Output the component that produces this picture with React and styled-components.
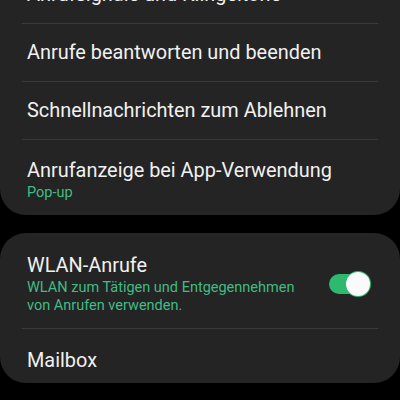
import styled, { createGlobalStyle } from "styled-components";

const GlobalStyle = createGlobalStyle`
  html, body {
    margin: 0;
    padding: 0;
    background: #000;
  }
  body {
    font-family: Roboto, "Noto Sans", sans-serif;
    -webkit-font-smoothing: antialiased;
  }
`;

const Page = styled.div`
  width: 400px;
  height: 400px;
  overflow: hidden;
  background: #000;
  display: flex;
  flex-direction: column;
  gap: 18px;
`;

const Card = styled.section`
  background: #242424;
  border-radius: 26px;
  margin-top: ${({ $offset }) => $offset || 0}px;
  display: flex;
  flex-direction: column;
`;

const Row = styled.div`
  display: flex;
  align-items: center;
  gap: 12px;
  min-height: ${({ $height }) => $height || 58}px;
  padding: ${({ $pad }) => $pad || "0"};
  margin: 0 22px;
  box-sizing: border-box;
  border-bottom: ${({ $last }) => ($last ? "none" : "1px solid #3a3a3a")};
`;

const TextBlock = styled.div`
  flex: 1;
  padding-left: 5px;
  display: flex;
  flex-direction: column;
  gap: 1px;
`;

const Title = styled.div`
  color: #f1f1f1;
  font-size: 19.9px;
  line-height: 24px;
`;

const Sub = styled.div`
  color: #3fbd84;
  font-size: 14.5px;
  line-height: 17.5px;
  padding-right: ${({ $wrap }) => ($wrap ? "20px" : "0")};
`;

const Toggle = styled.div`
  position: relative;
  width: 41px;
  height: 20px;
  margin-right: 8px;
  flex-shrink: 0;
`;

const Track = styled.div`
  position: absolute;
  left: 0;
  top: 0;
  width: 38px;
  height: 20px;
  border-radius: 10px;
  background: #2dba6e;
`;

const Thumb = styled.div`
  position: absolute;
  right: 0;
  top: -2px;
  width: 24px;
  height: 24px;
  border-radius: 50%;
  background: #fafafa;
  box-shadow: 0 0 0 1px #2dba6e;
`;

export default function App() {
  return (
    <>
      <GlobalStyle />
      <Page>
        <Card $offset={-34}>
          <Row>
            <TextBlock>
              <Title>Anrufsignale und Klingeltöne</Title>
            </TextBlock>
          </Row>
          <Row>
            <TextBlock>
              <Title>Anrufe beantworten und beenden</Title>
            </TextBlock>
          </Row>
          <Row>
            <TextBlock>
              <Title>Schnellnachrichten zum Ablehnen</Title>
            </TextBlock>
          </Row>
          <Row $last $height={75} $pad="19px 0 13px">
            <TextBlock>
              <Title>Anrufanzeige bei App-Verwendung</Title>
              <Sub>Pop-up</Sub>
            </TextBlock>
          </Row>
        </Card>

        <Card>
          <Row $height={96} $pad="20px 0 13px">
            <TextBlock>
              <Title>WLAN-Anrufe</Title>
              <Sub $wrap>
                WLAN zum Tätigen und Entgegennehmen von Anrufen verwenden.
              </Sub>
            </TextBlock>
            <Toggle>
              <Track />
              <Thumb />
            </Toggle>
          </Row>
          <Row $last $height={54} $pad="9px 0 0">
            <TextBlock>
              <Title>Mailbox</Title>
            </TextBlock>
          </Row>
        </Card>
      </Page>
    </>
  );
}
